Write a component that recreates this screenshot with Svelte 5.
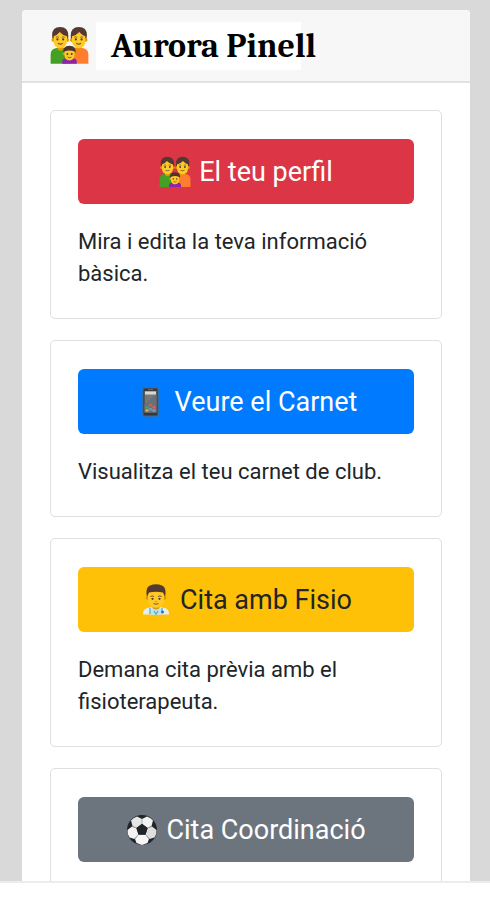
<script>
	const name = 'Aurora Pinell';

	const cards = [
		{ id: 1, icon: 'family', label: 'El teu perfil', color: 'danger', text: 'Mira i edita la teva informació bàsica.' },
		{ id: 2, icon: 'phone', label: 'Veure el Carnet', color: 'primary', text: 'Visualitza el teu carnet de club.' },
		{ id: 3, icon: 'doctor', label: 'Cita amb Fisio', color: 'warning', text: 'Demana cita prèvia amb el fisioterapeuta.' },
		{ id: 4, icon: 'ball', label: 'Cita Coordinació', color: 'secondary' }
	];
</script>

{#snippet parent(shirt)}
	<path d="M0.500 31V23.500Q0.500 18.500 5.500 18h6q5 0.500 5 5.500V31z" fill={shirt} />
	<path d="M6 15h5v4q-2.500 2.500-5 0z" fill="#e59600" />
	<path d="M2.500 12.500Q-0.500 1 8.300 0.800 17 1 14.500 12.500z" fill="#543930" />
	<circle cx="2.700" cy="11.500" r="1.500" fill="#e59600" />
	<circle cx="14.200" cy="11.500" r="1.500" fill="#e59600" />
	<path d="M3 8.500Q6 7.500 8 5q2 2.500 6 3.500v4q-0.500 5.500-5.500 5.800Q3.200 18 3 12.500z" fill="#ffca28" />
	<circle cx="6.100" cy="11" r="0.900" fill="#404040" />
	<circle cx="10.800" cy="11" r="0.900" fill="#404040" />
	<path d="M4.800 9.300q1.200-0.900 2.400 0M9.700 9.300q1.200-0.900 2.400 0" fill="none" stroke="#6d4c41" stroke-width="0.7" />
	<path d="M6.500 14.200q2 1.400 4 0" fill="none" stroke="#795548" stroke-width="0.9" />
{/snippet}

{#snippet icon(kind)}
	<svg class="icon" viewBox="0 0 32 32" aria-hidden="true">
		{#if kind === 'family'}
			{@render parent('#43a025')}
			<g transform="translate(32 0) scale(-1 1)">
				{@render parent('#ff7d2e')}
			</g>
			<path d="M10 31v-1.500q0-3 3.500-3h5q3.500 0 3.500 3V31z" fill="#8e24aa" />
			<path d="M11 22.500q-1-6 5-6.300 6 0.300 5 6.300z" fill="#4e342e" />
			<circle cx="11.500" cy="22.800" r="1.200" fill="#e59600" />
			<circle cx="20.500" cy="22.800" r="1.200" fill="#e59600" />
			<path d="M11.800 21q4.200-2 8.400 0v2.500q-0.300 4.500-4.200 4.800-3.900-0.300-4.200-4.800z" fill="#ffca28" />
			<circle cx="14.300" cy="23" r="0.800" fill="#404040" />
			<circle cx="17.800" cy="23" r="0.800" fill="#404040" />
			<path d="M14.500 25.500q1.500 1.200 3 0" fill="none" stroke="#795548" stroke-width="0.8" />
		{:else if kind === 'phone'}
			<rect x="7.500" y="1.500" width="16" height="29" rx="1.500" fill="#5c6265" />
			<rect x="8.500" y="2.500" width="14" height="27" rx="1" fill="#35393b" />
			<rect x="9.500" y="5" width="12" height="21.500" fill="#74797c" />
			<path d="M9.500 18l12-10v18.500h-12z" fill="#687177" />
			<rect x="10" y="5.500" width="11" height="3" fill="#d8d8d8" />
			<rect x="10.500" y="20.500" width="3" height="2" fill="#53a653" />
			<rect x="14" y="18" width="3" height="2.500" fill="#cf5d52" />
			<rect x="17.500" y="20" width="3" height="2.500" fill="#db6055" />
			<rect x="10.500" y="23.500" width="3" height="2" fill="#dfb955" />
			<rect x="14" y="22" width="3" height="2.500" fill="#5a98d2" />
			<rect x="17.500" y="23.500" width="3" height="2" fill="#72a5c9" />
			<path d="M13 3.700h5" stroke="#77797a" stroke-width="0.8" />
		{:else if kind === 'doctor'}
			<path d="M3 30.500V29.500q0-5 6-5.700l4-1h6l4 1q6 0.700 6 5.700v1z" fill="#e8eef0" />
			<path d="M12 22h8l2 8.500H10z" fill="#bce6ef" />
			<path d="M12.500 19h7v5q-3.500 3-7 0z" fill="#e59600" />
			<path d="M10 24v6M22 24v4M14 27l2 3 2-3" fill="none" stroke="#4baed0" stroke-width="1.300" />
			<circle cx="22.500" cy="28" r="1.500" fill="#1976d2" />
			<circle cx="7.500" cy="14" r="1.800" fill="#e59600" />
			<circle cx="24.500" cy="14" r="1.800" fill="#e59600" />
			<path d="M8 8.500h16V15q0 5.500-3.500 7.500-4.500 2.500-9 0Q8 20.500 8 15z" fill="#ffca28" />
			<path d="M7 13q-2-9 3-11.500 6-2.500 12 0 5 2.500 3 11.500l-2-4.500q-7-1.500-14 0z" fill="#543930" />
			<path d="M10.500 12.500q1.700-1.200 3.500 0M18 12.500q1.700-1.200 3.500 0" fill="none" stroke="#6d4c41" stroke-width="1" />
			<circle cx="12.500" cy="14.800" r="1.100" fill="#404040" />
			<circle cx="19.500" cy="14.800" r="1.100" fill="#404040" />
			<path d="M14.800 17.500h2.400" stroke="#e59600" stroke-width="1" />
			<path d="M13.500 19.500q2.500 1.500 5 0" fill="none" stroke="#795548" stroke-width="1" />
		{:else}
			<circle cx="16" cy="16" r="15" fill="#202426" />
			<path d="M16 5l5-2.500q4 1.500 6 4L25.500 12 21.500 14 16 10z" fill="#f2f2f2" />
			<path d="M16 5l-5-2.500q-4 1.500-6 4L6.500 12l4 2L16 10z" fill="#e6e6e6" />
			<path d="M6 12.500l4.500 1.500 2 6.500-4 4.500-5-1.500Q1 19.500 1.500 16z" fill="#f2f2f2" />
			<path d="M26 12.500l-4.500 1.500-2 6.500 4 4.500 5-1.500Q31 19.500 30.500 16z" fill="#dedede" />
			<path d="M12.500 20.500h7l3.500 4.500-1.500 4-5.500 2-5.500-2L9 25z" fill="#f7f7f7" />
			<path d="M16 5v5M6 12.500l4.500 1.500M26 12.500L21.500 14M12.500 20.500L8.500 25M19.500 20.500l4 4.500" stroke="#9da1a3" stroke-width="0.8" />
			<path d="M16 9.800l5.700 4.200-2.200 6.700h-7L10.300 14z" fill="#202426" />
		{/if}
	</svg>
{/snippet}

<div class="screen">
	<main class="viewport">
		<div class="panel">
			<header class="panel-header">
				{@render icon('family')}
				<h1>{name}</h1>
			</header>

			<div class="panel-body">
				{#each cards as card (card.id)}
					<section class="card">
						<button class={`btn ${card.color}`}>
							{@render icon(card.icon)}
							<span>{card.label}</span>
						</button>
						{#if card.text}
							<p>{card.text}</p>
						{/if}
					</section>
				{/each}
			</div>
		</div>
	</main>
</div>

<style>
	:global(body) {
		margin: 0;
		background-color: #fff;
	}

	.screen {
		display: flex;
		box-sizing: border-box;
		height: 100vh;
		padding-bottom: 17px;
		font-family: Roboto, 'Liberation Sans', sans-serif;
		color: #212529;
	}

	.viewport {
		flex: 1;
		overflow: hidden;
		padding: 10px 20px 0 22px;
		background-color: #d9d9d9;
		border-bottom: 2px solid #ececec;
	}

	.panel {
		background-color: #fff;
		border-radius: 4px;
		overflow: hidden;
	}

	.panel-header {
		display: flex;
		align-items: center;
		gap: 7px;
		height: 71px;
		padding: 0 28px;
		background-color: #f7f7f7;
		border-bottom: 2px solid #e2e2e2;
	}

	.panel-header .icon {
		width: 39px;
		height: 39px;
	}

	h1 {
		margin: 0;
		padding-left: 15px;
		font-family: Cambria, 'Liberation Serif', serif;
		font-size: 34px;
		font-weight: bold;
		line-height: 48px;
		white-space: nowrap;
		color: #000;
		background: linear-gradient(#fff, #fff) no-repeat left / 205px 100%;
	}

	.panel-body {
		display: flex;
		flex-direction: column;
		gap: 21px;
		padding: 27px 28px;
	}

	.card {
		padding: 28px 27px;
		border: 1px solid #dfdfdf;
		border-radius: 5px;
	}

	/* the last card runs on below the fold */
	.card:last-child {
		padding-bottom: 80px;
	}

	.icon {
		flex: none;
		width: 32px;
		height: 32px;
	}

	.btn {
		display: flex;
		align-items: center;
		justify-content: center;
		gap: 8px;
		width: 100%;
		height: 65px;
		padding: 0;
		border: none;
		border-radius: 6px;
		font-family: inherit;
		font-size: 27px;
		color: #fff;
		cursor: pointer;
	}

	.danger {
		background-color: #dc3545;
	}

	.primary {
		background-color: #007bff;
	}

	.warning {
		background-color: #ffc107;
		color: #212529;
	}

	.secondary {
		background-color: #6c757d;
	}

	p {
		margin: 22px 0 0;
		font-size: 22px;
		line-height: 32px;
	}
</style>
